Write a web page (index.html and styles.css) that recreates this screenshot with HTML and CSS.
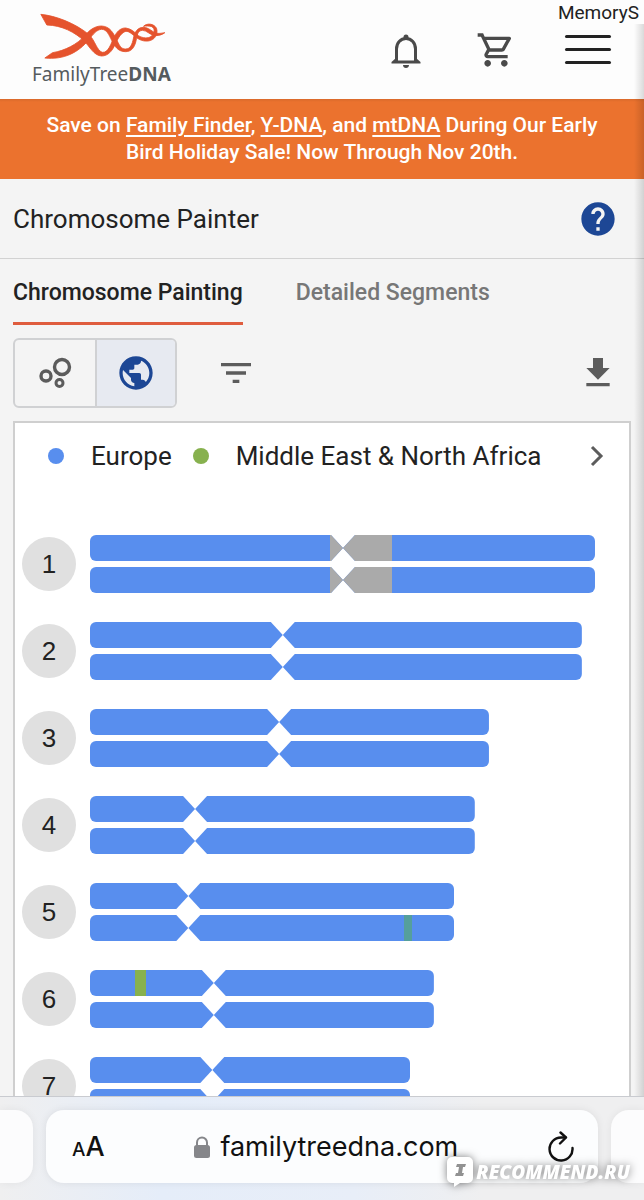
FILE: index.html
```html
<!DOCTYPE html>
<html lang="en">
<head>
    <meta charset="UTF-8">
    <meta name="viewport" content="width=device-width, initial-scale=1.0">
    <title>FamilyTreeDNA - Chromosome Painter</title>
    <link rel="stylesheet" href="styles.css">
</head>
<body>

    <!-- Page -->
    <div class="page">
        <header class="header">
            <a href="#" class="logo" aria-label="FamilyTreeDNA">
                <svg class="logo-mark" viewBox="120 38 380 144" fill="#e5532d" stroke="#e5532d" stroke-width="2.500" stroke-linejoin="round" aria-hidden="true">
                    <path d="M122 42 C165 46 225 68 268 104 C285 122 290 150 306 156 C325 158 332 130 343 108 C352 90 365 82 377 83 C393 85 404 96 415 106 C428 114 444 115 453 108 C463 100 466 85 455 79 C448 76 438 77 430 78 C441 67 462 70 469 84 C475 102 463 120 444 122 C425 124 412 115 400 105 C390 96 382 91 374 94 C360 100 352 118 345 132 C336 152 324 167 304 167 C281 166 268 138 252 122 C225 96 185 75 140 74 Z"/>
                    <path d="M134 173 L157 157 C195 151 232 131 253 107 C267 90 283 77 304 77 C330 78 340 99 351 121 C358 136 363 146 376 146 C391 146 396 132 400 113 C404 93 413 82 429 81 C447 81 456 96 471 99 C479 100 486 98 494 97 C487 103 478 105 467 106 C450 106 441 90 427 90 C412 91 411 105 408 120 C403 143 393 154 376 154 C353 154 343 137 335 121 C326 103 320 87 304 87 C290 88 280 100 266 118 C235 157 190 179 134 173 Z"/>
                </svg>
                <span class="logo-text">FamilyTree<b>DNA</b></span>
            </a>
            <nav class="header-actions">
                <button class="icon-button" aria-label="Notifications">
                    <svg width="32" height="40" viewBox="0 0 32 40"><path fill="none" stroke="#4a4a4a" stroke-width="3" d="M6.500 32V19c0-6 4-10.500 9.500-10.500S25.500 13 25.500 19v13"/><path fill="#4a4a4a" d="M13.500 8.500V7a2.500 2.500 0 0 1 5 0v1.500zM6 28h20l4.500 4v1.500h-29V32zM13 35h6c0 2-1.300 3-3 3s-3-1-3-3z"/><path fill="#fdfdfd" d="M8 28h16v2.500H8z"/></svg>
                </button>
                <button class="icon-button" aria-label="Cart">
                    <svg width="40" height="40" viewBox="0 0 24 24"><path fill="#4a4a4a" d="M15.550 13c.75 0 1.410-.41 1.750-1.030l3.580-6.490C21.250 4.820 20.760 4 20.010 4H5.210l-.94-2H1v2h2l3.600 7.590-1.350 2.440C4.520 15.370 5.480 17 7 17h12v-2H7l1.100-2h7.450zM6.160 6h12.150l-2.760 5H8.530L6.160 6zM7 18c-1.100 0-1.990.9-1.990 2S5.900 22 7 22s2-.9 2-2-.9-2-2-2zm10 0c-1.100 0-1.990.9-1.990 2s.89 2 1.990 2 2-.9 2-2-.9-2-2-2z"/></svg>
                </button>
                <button class="menu-button" aria-label="Menu">
                    <span></span><span></span><span></span>
                </button>
            </nav>
        </header>

        <div class="banner">
            <p>Save on <a href="#">Family Finder</a>, <a href="#">Y-DNA</a>, and <a href="#">mtDNA</a> During Our Early Bird Holiday Sale! Now Through Nov 20th.</p>
        </div>

        <div class="title-bar">
            <h1>Chromosome Painter</h1>
            <button class="icon-button" aria-label="Help">
                <svg width="40" height="40" viewBox="0 0 24 24"><path fill="#1d4795" d="M12 2C6.480 2 2 6.480 2 12s4.480 10 10 10 10-4.480 10-10S17.520 2 12 2zm1 17h-2v-2h2v2zm2.070-7.750l-.9.920C13.450 12.900 13 13.500 13 15h-2v-.5c0-1.100.45-2.100 1.170-2.830l1.240-1.260c.37-.36.59-.86.59-1.410 0-1.100-.9-2-2-2s-2 .9-2 2H8c0-2.210 1.790-4 4-4s4 1.790 4 4c0 .88-.36 1.680-.93 2.250z"/></svg>
            </button>
        </div>

        <nav class="tabs">
            <a href="#" class="tab active">Chromosome Painting</a>
            <a href="#" class="tab">Detailed Segments</a>
        </nav>

        <div class="toolbar">
            <div class="toggle">
                <button aria-label="Clusters">
                    <svg width="40" height="40" viewBox="0 0 40 40" fill="none" stroke="#5c5c5c"><circle cx="27" cy="14" r="7.500" stroke-width="3.400"/><circle cx="11" cy="23" r="5" stroke-width="3.400"/><circle cx="24.500" cy="30" r="3.500" stroke-width="3"/></svg>
                </button>
                <button class="selected" aria-label="World regions">
                    <svg width="40" height="40" viewBox="0 0 24 24"><path fill="#1d4795" d="M12 2C6.480 2 2 6.480 2 12s4.480 10 10 10 10-4.480 10-10S17.520 2 12 2zm-1 17.930c-3.950-.49-7-3.850-7-7.930 0-.62.080-1.210.21-1.790L9 15v1c0 1.100.9 2 2 2v1.930zm6.900-2.540c-.26-.81-1-1.390-1.900-1.390h-1v-3c0-.55-.45-1-1-1H8v-2h2c.55 0 1-.45 1-1V7h2c1.100 0 2-.9 2-2v-.41c2.930 1.190 5 4.060 5 7.410 0 2.080-.8 3.970-2.100 5.390z"/></svg>
                </button>
            </div>
            <button class="icon-button filter" aria-label="Filter">
                <svg width="40" height="40" viewBox="0 0 24 24"><path fill="#5c5c5c" d="M10 18h4v-2h-4v2zM3 6v2h18V6H3zm3 7h12v-2H6v2z"/></svg>
            </button>
            <button class="icon-button download" aria-label="Download">
                <svg width="40" height="40" viewBox="0 0 24 24"><path fill="#5c5c5c" d="M19 9h-4V3H9v6H5l7 7 7-7zM5 18v2h14v-2H5z"/></svg>
            </button>
        </div>

        <main class="card">
            <div class="legend">
                <span class="dot europe"></span>
                <span>Europe</span>
                <span class="dot mena"></span>
                <span>Middle East &amp; North Africa</span>
                <button class="next" aria-label="Next populations">
                    <svg width="16" height="24" viewBox="0 0 16 24" fill="none" stroke="#5c5c5c" stroke-width="3"><path d="M4 3l9 9-9 9"/></svg>
                </button>
            </div>
            <div id="chromosomes" class="chromosomes"></div>
        </main>
        <div class="edge-shadow"></div>
    </div>

    <div class="user-label">MemoryS</div>

    <!-- Browser bar -->
    <footer class="browser-bar">
        <div class="side-tab"></div>
        <div class="address">
            <button class="text-size" aria-label="Text size"><small>A</small>A</button>
            <div class="domain">
                <svg width="16" height="22" viewBox="0 0 16 22"><rect x="0" y="9" width="16" height="13" rx="2.500" fill="#85868a"/><path d="M3 10V6.500a5 5 0 0 1 10 0V10" fill="none" stroke="#85868a" stroke-width="2"/></svg>
                <span>familytreedna.com</span>
            </div>
            <button class="reload" aria-label="Reload">
                <svg width="26" height="32" viewBox="0 0 26 32" fill="none" stroke="#111" stroke-width="2.400" stroke-linecap="round" stroke-linejoin="round"><path d="M24.500 17a11.500 11.500 0 1 1-11.500-10.500h4.500"/><path d="M12.500 1.500l5.500 5-6 6"/></svg>
            </button>
        </div>
        <div class="side-tab"></div>
        <div class="watermark">
            <svg width="28" height="31" viewBox="0 0 28 31"><path fill="#fff" d="M6 1h16a5 5 0 0 1 5 5v16a5 5 0 0 1-5 5H14l-6 4v-4H6a5 5 0 0 1-5-5V6a5 5 0 0 1 5-5z"/><path fill="#929292" d="M11 8h9l-1 3h-2l-1 6h2l-1 3H9l1-3h2l1-6h-3z"/></svg>
            <span>RECOMMEND.RU</span>
        </div>
    </footer>

    <script>
        // All values are percentages: length of the longest chromosome,
        // centromere position in the bar, segments inside one arm
        const chromosomes = [
            { length: 100, centromere: 50.1, segments: [
                { copy: 0, arm: 0, start: 95, width: 5, type: "unassigned" },
                { copy: 0, arm: 1, start: 0, width: 19.4, type: "unassigned" },
                { copy: 1, arm: 0, start: 95, width: 5, type: "unassigned" },
                { copy: 1, arm: 1, start: 0, width: 19.4, type: "unassigned" }
            ] },
            { length: 97.4, centromere: 39.2, segments: [] },
            { length: 79, centromere: 47.4, segments: [] },
            { length: 76.2, centromere: 27.3, segments: [] },
            { length: 72.1, centromere: 27, segments: [
                { copy: 1, arm: 1, start: 81.2, width: 3, type: "mixed" }
            ] },
            { length: 68.1, centromere: 36, segments: [
                { copy: 0, arm: 0, start: 36.3, width: 9, type: "mena" }
            ] },
            { length: 63.4, centromere: 38.2, segments: [] }
        ];

        function drawArm(item, copy, arm) {
            const width = arm === 0 ? item.centromere : 100 - item.centromere;
            const segments = item.segments
                .filter(s => s.copy === copy && s.arm === arm)
                .map(s => `<span class="${s.type}" style="margin-left:${s.start}%;width:${s.width}%"></span>`)
                .join("");
            return `<div class="arm ${arm === 0 ? "short" : "long"}" style="width:${width}%">${segments}</div>`;
        }

        function drawCopy(item, copy) {
            return `<div class="bar" style="width:${item.length}%">${drawArm(item, copy, 0)}${drawArm(item, copy, 1)}</div>`;
        }

        document.getElementById("chromosomes").innerHTML = chromosomes.map((item, i) => `
            <div class="chromosome">
                <span class="number">${i + 1}</span>
                <div class="bars">${drawCopy(item, 0)}${drawCopy(item, 1)}</div>
            </div>`).join("");
    </script>
</body>
</html>
```
FILE: styles.css
```css
* {
    box-sizing: border-box;
}

body {
    font-family: Roboto, sans-serif;
    background-color: #f4f4f4;
    color: #222;
    margin: 0;
    height: 100vh;
    display: flex;
    flex-direction: column;
    overflow: hidden;
}

button {
    font: inherit;
    color: inherit;
    background: none;
    border: 0;
    padding: 0;
    display: flex;
    align-items: center;
    justify-content: center;
}

.page {
    flex: 1;
    min-height: 0;
    overflow: hidden;
    position: relative;
}

/* Header */
.header {
    height: 99px;
    padding: 0 32px;
    background-color: #fdfdfd;
    display: flex;
    align-items: center;
    justify-content: space-between;
}

.logo {
    display: flex;
    flex-direction: column;
    color: #555b5e;
    text-decoration: none;
}

.logo-mark {
    width: 127px;
    height: 48px;
    margin-left: 8px;
}

.logo-text {
    font-family: "Noto Sans", sans-serif;
    font-size: 19px;
    line-height: 26px;
}

.header-actions {
    display: flex;
    align-items: center;
    gap: 48px;
}

.header-actions .icon-button:first-child {
    margin-right: 6px;
}

.menu-button {
    width: 48px;
    flex-direction: column;
    gap: 10px;
}

.menu-button span {
    width: 46px;
    height: 3px;
    border-radius: 2px;
    background-color: #222;
}

/* Sale banner */
.banner {
    background: linear-gradient(#d96a2b, #eb722e 3px);
    color: #fff;
    padding: 13px 32px;
    text-align: center;
    font-size: 21px;
    font-weight: 500;
    line-height: 27px;
}

.banner p {
    margin: 0;
}

.banner a {
    color: inherit;
    text-underline-offset: 3px;
}

/* Title */
.title-bar {
    height: 80px;
    padding: 0 26px 0 13px;
    border-bottom: 1px solid #d2d2d2;
    display: flex;
    align-items: center;
    justify-content: space-between;
}

h1 {
    margin: 0;
    font-size: 26px;
    font-weight: 400;
}

/* Tabs */
.tabs {
    display: flex;
    gap: 53px;
    padding: 0 13px;
}

.tab {
    padding: 18px 0 13px;
    font-size: 23px;
    font-weight: 500;
    line-height: 32px;
    color: #777;
    text-decoration: none;
    border-bottom: 3px solid transparent;
}

.tab.active {
    color: #222;
    border-bottom-color: #df5c3e;
}

/* Toolbar */
.toolbar {
    display: flex;
    align-items: center;
    padding: 13px 26px 13px 13px;
}

.toggle {
    display: flex;
    border: 2px solid #d0d1d3;
    border-radius: 6px;
    overflow: hidden;
}

.toggle button {
    width: 80px;
    height: 66px;
}

.toggle .selected {
    background-color: #e7eaf1;
    border-left: 2px solid #d0d1d3;
}

.filter {
    margin-left: 39px;
}

.download {
    margin-left: auto;
}

/* Chromosome card */
.card {
    margin: 0 13px;
    background-color: #fff;
    border: 2px solid #cfcfcf;
}

.legend {
    display: flex;
    align-items: center;
    padding: 16px 25px 16px 33px;
    font-size: 26px;
    line-height: 34px;
}

.dot {
    width: 16px;
    height: 16px;
    border-radius: 50%;
    margin-right: 27px;
}

.dot.europe {
    background-color: #588eee;
}

.dot.mena {
    background-color: #87b14e;
    margin-left: 21px;
}

.next {
    margin-left: auto;
}

.chromosomes {
    display: flex;
    flex-direction: column;
    gap: 29px;
    padding: 46px 34px 29px 7px;
}

.chromosome {
    display: flex;
    align-items: center;
    gap: 14px;
}

.number {
    width: 54px;
    height: 54px;
    border-radius: 50%;
    background-color: #e0e0e0;
    font-family: "Liberation Sans", sans-serif;
    font-size: 26px;
    line-height: 54px;
    text-align: center;
}

.bars {
    flex: 1;
    display: flex;
    flex-direction: column;
    gap: 6px;
}

.bar {
    height: 26px;
    display: flex;
}

.arm {
    display: flex;
    background-color: #588eee;
}

.arm.short {
    border-radius: 6px 0 0 6px;
    clip-path: polygon(0 0, calc(100% - 12px) 0, 100% 50%, calc(100% - 12px) 100%, 0 100%);
}

.arm.long {
    border-radius: 0 6px 6px 0;
    clip-path: polygon(12px 0, 100% 0, 100% 100%, 12px 100%, 0 50%);
}

.unassigned {
    background-color: #aaa;
}

.mixed {
    background-color: #559f9c;
}

.mena {
    background-color: #87b14e;
}

/* Shade along the right edge of the page */
.edge-shadow {
    position: absolute;
    top: 24px;
    right: 0;
    bottom: 0;
    width: 10px;
    background: linear-gradient(to right, transparent, rgba(0, 0, 0, 0.14));
}

.user-label {
    position: absolute;
    top: 2px;
    right: 5px;
    font-size: 19px;
    line-height: 22px;
}

/* Browser bar */
.browser-bar {
    height: 104px;
    padding: 13px 0 17px;
    border-top: 1px solid #c9cbd0;
    background: linear-gradient(to right, #efeff0, #e5edf9 25%, #e8eef8 55%, #efeff0 75%);
    display: flex;
    gap: 13px;
    position: relative;
}

.side-tab {
    width: 33px;
    background-color: #fcfcfd;
    border-radius: 0 18px 18px 0;
    box-shadow: 0 0 8px rgba(0, 0, 0, 0.06);
}

.address + .side-tab {
    border-radius: 18px 0 0 18px;
}

.address {
    flex: 1;
    padding: 0 24px 0 26px;
    background-color: #fcfdfe;
    border-radius: 18px;
    box-shadow: 0 0 8px rgba(0, 0, 0, 0.08);
    display: flex;
    align-items: center;
    justify-content: space-between;
    font-family: Inter, sans-serif;
    color: #111;
}

.text-size {
    align-items: baseline;
    font-size: 27px;
    font-weight: 500;
}

.text-size small {
    font-size: 19px;
}

.domain {
    display: flex;
    align-items: center;
    gap: 10px;
    font-size: 27px;
}

.watermark {
    position: absolute;
    right: 14px;
    bottom: 13px;
    display: flex;
    align-items: center;
    gap: 2px;
    color: #fff;
    font-family: "Open Sans", sans-serif;
    font-size: 19px;
    font-weight: 800;
    font-style: italic;
    line-height: 24px;
    filter: drop-shadow(0 0 4px rgba(0, 0, 0, 0.5));
}
```
